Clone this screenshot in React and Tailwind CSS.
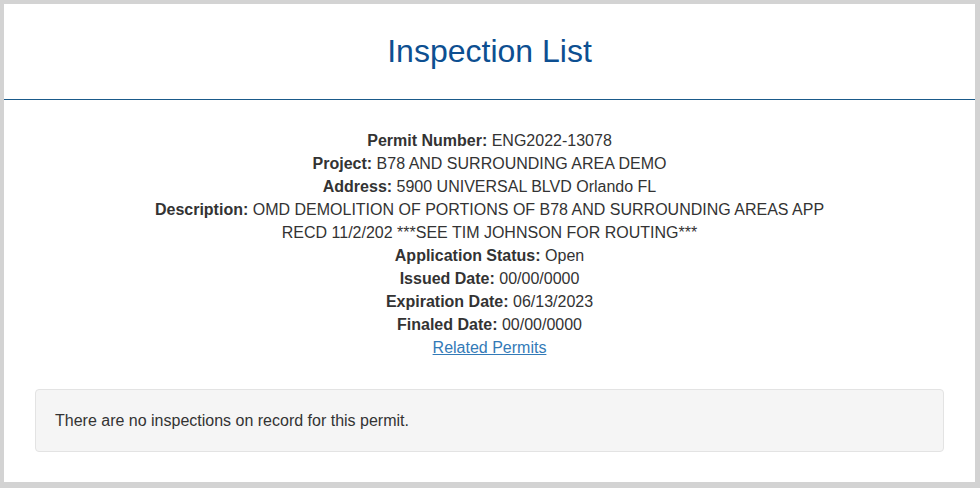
export default function App() {
    const rows = [
        ["Permit Number:", "ENG2022-13078"],
        ["Project:", "B78 AND SURROUNDING AREA DEMO"],
        ["Address:", "5900 UNIVERSAL BLVD Orlando FL"],
        ["Description:", "OMD DEMOLITION OF PORTIONS OF B78 AND SURROUNDING AREAS APP RECD 11/2/202 ***SEE TIM JOHNSON FOR ROUTING***"],
        ["Application Status:", "Open"],
        ["Issued Date:", "00/00/0000"],
        ["Expiration Date:", "06/13/2023"],
        ["Finaled Date:", "00/00/0000"],
    ]

    return (
        <div className="h-[488px] w-[980px] bg-[#d3d3d3] pt-[4px] pl-[4px] pr-[5px] pb-[6px] font-['Liberation_Sans',Arial,sans-serif] text-[#333]">
            <div className="h-full bg-white">
                {/* header */}
                <div className="h-[96px] border-b border-[#1a5a8a] flex items-center justify-center">
                    <h1 className="text-[32px] text-[#0d4f91] mt-[-1px]">Inspection List</h1>
                </div>

                {/* permit details */}
                <div className="mx-auto max-w-[690px] pt-[29px] text-center text-[16px] leading-[23px]">
                    {rows.map(([label, value]) => (
                        <div key={label}>
                            <b>{label}</b> {value}
                        </div>
                    ))}
                    <a href="#" className="text-[#337ab7] underline">Related Permits</a>
                </div>

                <div className="mx-[31px] mt-[30px] h-[63px] rounded border border-[#e3e3e3] bg-[#f5f5f5] px-[19px] flex items-center text-[16px]">
                    There are no inspections on record for this permit.
                </div>
            </div>
        </div>
    )
}
